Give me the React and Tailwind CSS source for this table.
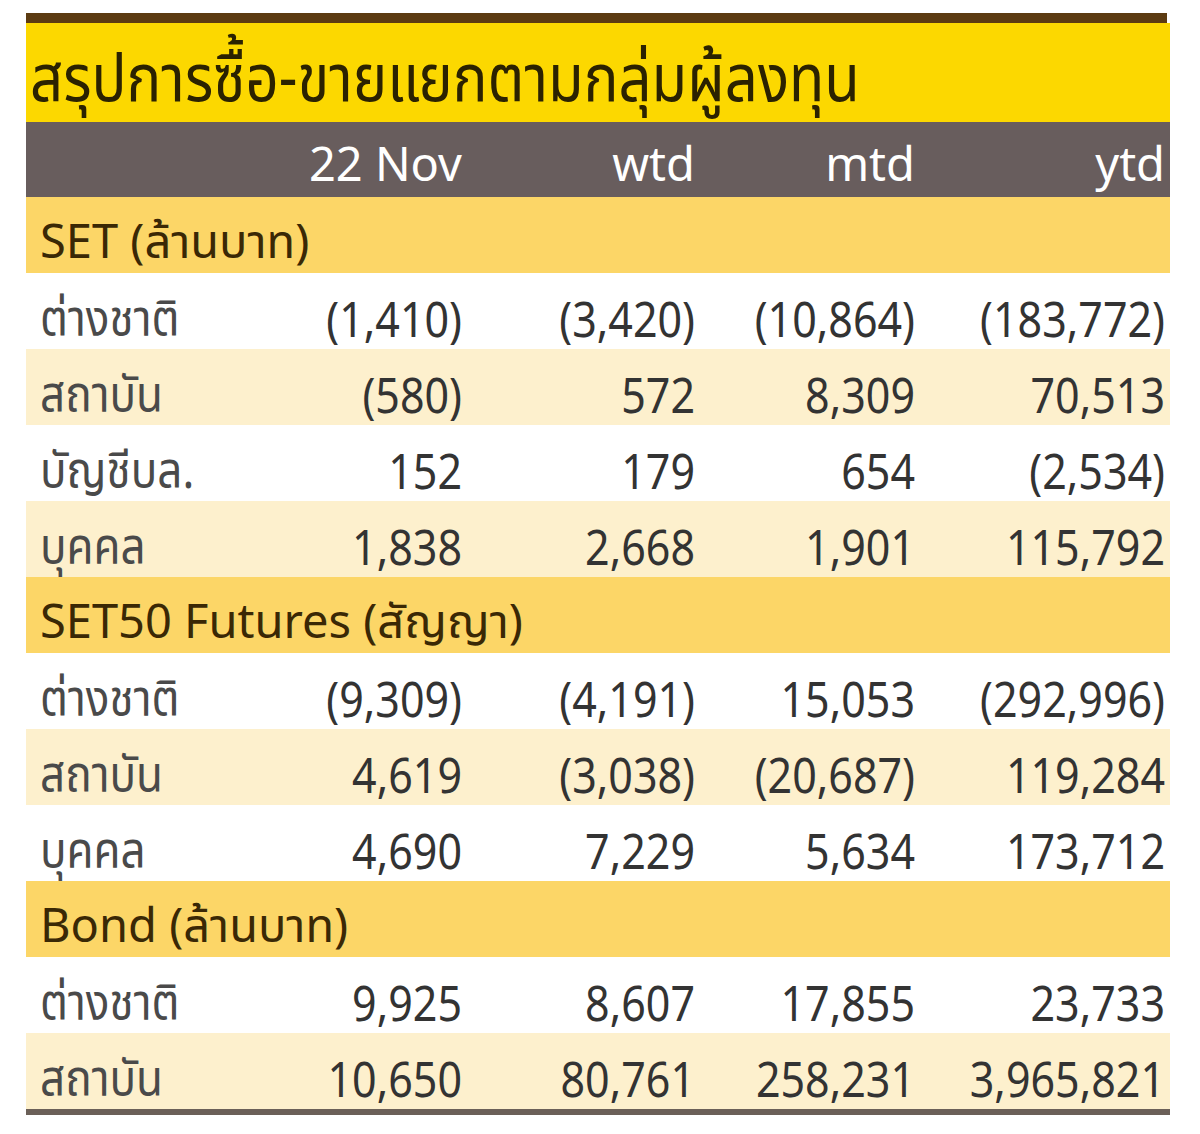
import React from 'react'

const sections = [
  {
    title: 'SET (ล้านบาท)',
    rows: [
      ['ต่างชาติ', '(1,410)', '(3,420)', '(10,864)', '(183,772)'],
      ['สถาบัน', '(580)', '572', '8,309', '70,513'],
      ['บัญชีบล.', '152', '179', '654', '(2,534)'],
      ['บุคคล', '1,838', '2,668', '1,901', '115,792'],
    ],
  },
  {
    title: 'SET50 Futures (สัญญา)',
    rows: [
      ['ต่างชาติ', '(9,309)', '(4,191)', '15,053', '(292,996)'],
      ['สถาบัน', '4,619', '(3,038)', '(20,687)', '119,284'],
      ['บุคคล', '4,690', '7,229', '5,634', '173,712'],
    ],
  },
  {
    title: 'Bond (ล้านบาท)',
    rows: [
      ['ต่างชาติ', '9,925', '8,607', '17,855', '23,733'],
      ['สถาบัน', '10,650', '80,761', '258,231', '3,965,821'],
    ],
  },
]

const grid = 'grid grid-cols-[236px_200px_233px_220px_250px] pr-[6px] items-center leading-none'
const font = "font-['Noto_Sans_Thai','Noto_Sans','Tahoma','Liberation_Sans',sans-serif]"
const tall = 'inline-block scale-y-[1.15] leading-none'

export default function App() {
  return (
    <div className={`w-[1200px] h-[1134px] bg-white pt-[13px] pl-[26px] ${font}`}>
      <div className="w-[1144px]">
        <div className="h-[10px] w-[1141px] bg-[#5c3b12]" />
        <div className="h-[99px] bg-[#fcd800] flex items-end pl-[4px] pb-[13px] leading-none">
          <span className={`${tall} scale-y-[1.2] text-[58px] text-[#2b2200]`}>สรุปการซื้อ-ขายแยกตามกลุ่มผู้ลงทุน</span>
        </div>
        <div className={`${grid} h-[75px] pt-[13px] bg-[#685d5d] text-white text-[47px]`}>
          <div />
          <div className="text-right">22 Nov</div>
          <div className="text-right">wtd</div>
          <div className="text-right">mtd</div>
          <div className="text-right">ytd</div>
        </div>
        {sections.map((s) => (
          <div key={s.title}>
            <div className="h-[76px] pt-[17px] bg-[#fcd667] flex items-center pl-[14px] text-[47px] leading-none text-[#3a2805]">
              <span className="leading-none">{s.title}</span>
            </div>
            {s.rows.map((r, i) => (
              <div key={i} className={`${grid} h-[76px] pt-[20px] ${i % 2 ? 'bg-[#fdf0cd]' : 'bg-white'}`}>
                <div className="pl-[14px] text-[44px] text-[#4a4a4a]"><span className={tall}>{r[0]}</span></div>
                {r.slice(1).map((v, j) => (
                  <div key={j} className="text-right text-[43px] text-[#333]"><span className={tall}>{v}</span></div>
                ))}
              </div>
            ))}
          </div>
        ))}
        <div className="h-[6px] bg-[#6b6058]" />
      </div>
    </div>
  )
}
